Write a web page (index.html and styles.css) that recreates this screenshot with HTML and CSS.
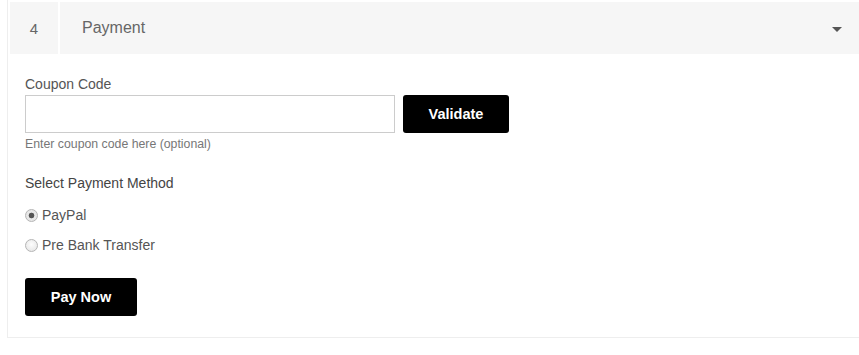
FILE: index.html
```html
<!DOCTYPE html>
<html>
<head>
<meta charset="utf-8">
<link rel="stylesheet" href="styles.css">
</head>
<body>
<div class="step">
  <div class="step-head">
    <div class="step-num">4</div>
    <div class="step-title">
      <span>Payment</span>
      <span class="caret"></span>
    </div>
  </div>
  <div class="step-body">
    <label class="label" for="coupon">Coupon Code</label>
    <div class="coupon-row">
      <input id="coupon" class="input" type="text">
      <button class="btn btn-validate">Validate</button>
    </div>
    <div class="help">Enter coupon code here (optional)</div>
    <div class="section-label">Select Payment Method</div>
    <label class="radio-row first"><input type="radio" name="pm" class="radio" checked><span>PayPal</span></label>
    <label class="radio-row"><input type="radio" name="pm" class="radio"><span>Pre Bank Transfer</span></label>
    <button class="btn btn-pay">Pay Now</button>
  </div>
</div>
</body>
</html>
```

FILE: styles.css
```css
html, body {
  margin: 0;
  padding: 0;
  background: #fff;
  font-family: "Liberation Sans", Arial, sans-serif;
}
.step {
  margin-left: 7px;
  border-left: 1px solid #eee;
  border-bottom: 1px solid #eee;
  padding-top: 2px;
}
.step-head {
  display: flex;
  height: 52px;
  margin-left: 2px;
}
.step-num {
  width: 48px;
  background: #f6f6f6;
  margin-right: 2px;
  display: flex;
  align-items: center;
  justify-content: center;
  font-size: 15px;
  color: #666;
}
.step-title {
  flex: 1;
  background: #f6f6f6;
  display: flex;
  align-items: center;
  justify-content: space-between;
  padding: 0 17px 0 22px;
  font-size: 16px;
  color: #666;
}
.caret {
  width: 0;
  height: 0;
  border-left: 5px solid transparent;
  border-right: 5px solid transparent;
  border-top: 5px solid #555;
  margin-top: 2px;
}
.step-body {
  padding: 20px 17px 21px;
  display: flex;
  flex-direction: column;
  align-items: flex-start;
}
.label {
  display: block;
  font-size: 14px;
  line-height: 20px;
  color: #555;
  margin-bottom: 1px;
}
.coupon-row {
  display: flex;
  gap: 8px;
}
.input {
  box-sizing: border-box;
  width: 370px;
  height: 38px;
  border: 1px solid #ccc;
  margin: 0;
  padding: 0 10px;
  font-size: 14px;
}
.btn {
  box-sizing: border-box;
  height: 38px;
  background: #000;
  color: #fff;
  border: 0;
  border-radius: 3px;
  font-family: "Liberation Sans", Arial, sans-serif;
  font-weight: bold;
  font-size: 14.5px;
  padding: 0;
  margin: 0;
}
.btn-validate {
  width: 106px;
}
.help {
  font-size: 12.3px;
  line-height: 17px;
  color: #777;
  margin-top: 3px;
}
.section-label {
  font-size: 14px;
  line-height: 20px;
  color: #444;
  margin-top: 20px;
}
.radio-row {
  display: flex;
  align-items: center;
  font-size: 14px;
  line-height: 20px;
  color: #555;
  margin-top: 10px;
}
.radio-row.first {
  margin-top: 12px;
}
.radio {
  appearance: none;
  -webkit-appearance: none;
  box-sizing: border-box;
  width: 13px;
  height: 13px;
  margin: 1px 4px 0 0;
  border-radius: 50%;
  border: 1px solid #b5b5b5;
  background: radial-gradient(circle at 50% 40%, #fdfdfd 0%, #e2e2e2 100%);
}
.radio:checked {
  background: radial-gradient(circle, #555 0, #555 2.5px, #e9e9e9 3.2px, #e2e2e2 100%);
}
.btn-pay {
  width: 112px;
  margin-top: 23px;
}
```
